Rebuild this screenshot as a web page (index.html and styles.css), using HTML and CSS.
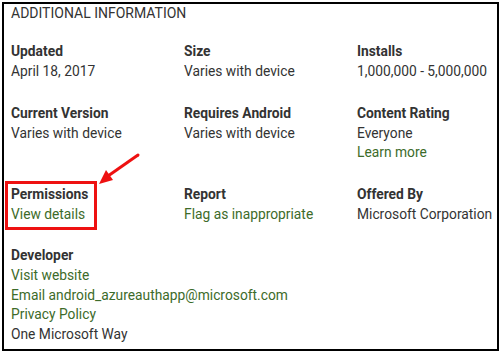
FILE: index.html
```html
<!DOCTYPE html>
<html lang="en">
<head>
    <meta charset="UTF-8">
    <title>Additional Information</title>
    <link rel="stylesheet" href="styles.css">
</head>
<body>
    <div class="panel">
        <h2 class="panel-title">Additional Information</h2>

        <div class="details">
            <div class="meta">
                <div class="meta-title">Updated</div>
                <div class="meta-value">April 18, 2017</div>
            </div>
            <div class="meta">
                <div class="meta-title">Size</div>
                <div class="meta-value">Varies with device</div>
            </div>
            <div class="meta">
                <div class="meta-title">Installs</div>
                <div class="meta-value">1,000,000 - 5,000,000</div>
            </div>

            <div class="meta">
                <div class="meta-title">Current Version</div>
                <div class="meta-value">Varies with device</div>
            </div>
            <div class="meta">
                <div class="meta-title">Requires Android</div>
                <div class="meta-value">Varies with device</div>
            </div>
            <div class="meta">
                <div class="meta-title">Content Rating</div>
                <div class="meta-value">Everyone</div>
                <a class="meta-link" href="#">Learn more</a>
            </div>

            <div class="meta highlighted">
                <div class="meta-title">Permissions</div>
                <a class="meta-link" href="#">View details</a>
                <span class="highlight-box"></span>
                <svg class="highlight-arrow" width="44" height="34" viewBox="0 0 44 34">
                    <line x1="42" y1="2" x2="12" y2="23" stroke="#ee1111" stroke-width="3" stroke-linecap="round"/>
                    <polygon points="3,31 10,17 17,27" fill="#ee1111"/>
                </svg>
            </div>
            <div class="meta">
                <div class="meta-title">Report</div>
                <a class="meta-link" href="#">Flag as inappropriate</a>
            </div>
            <div class="meta">
                <div class="meta-title">Offered By</div>
                <div class="meta-value">Microsoft Corporation</div>
            </div>

            <div class="meta wide">
                <div class="meta-title">Developer</div>
                <a class="meta-link" href="#">Visit website</a>
                <a class="meta-link" href="#">Email android_azureauthapp@microsoft.com</a>
                <a class="meta-link" href="#">Privacy Policy</a>
                <div class="meta-value">One Microsoft Way</div>
            </div>
        </div>
    </div>
</body>
</html>
```

FILE: styles.css
```css
:root {
    --text: #333333;
    --link: #3d6b2a;
    --mark: #ee1111;
}

body {
    margin: 0;
    font-family: Roboto, "Liberation Sans", Arial, sans-serif;
    color: var(--text);
    background: #ffffff;
}

.panel {
    box-sizing: border-box;
    width: 497px;
    height: 349px;
    margin: 2px 0 0 2px;
    padding: 0 7px;
    border: 2px solid #000000;
}

.panel-title {
    margin: 0;
    font-size: 14px;
    font-weight: 400;
    line-height: 18px;
    text-transform: uppercase;
    color: var(--text);
}

.details {
    display: grid;
    grid-template-columns: 173px 173px 1fr;
    row-gap: 21px;
    margin-top: 19px;
}

.meta {
    position: relative;
    font-size: 13.8px;
}

.meta.wide {
    grid-column: 1 / -1;
}

.meta-title {
    font-weight: 700;
    line-height: 20px;
    margin-bottom: 1px;
}

.meta-value,
.meta-link {
    display: block;
    line-height: 19.5px;
    white-space: nowrap;
}

.meta-link {
    color: var(--link);
    text-decoration: none;
}

.highlight-box {
    position: absolute;
    left: -6px;
    top: -3px;
    width: 92px;
    height: 49px;
    box-sizing: border-box;
    border: 3px solid var(--mark);
}

.highlight-arrow {
    position: absolute;
    left: 85px;
    top: -31px;
}
```
